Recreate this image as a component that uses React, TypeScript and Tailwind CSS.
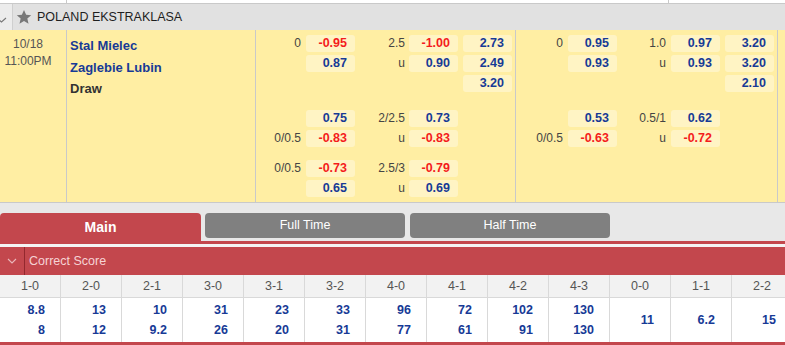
import React from "react";

type Row = { l1?: string; v1?: string; l2?: string; v2?: string; v3?: string };

const left: Row[][] = [
  [
    { l1: "0", v1: "-0.95", l2: "2.5", v2: "-1.00", v3: "2.73" },
    { v1: "0.87", l2: "u", v2: "0.90", v3: "2.49" },
    { v3: "3.20" },
  ],
  [
    { v1: "0.75", l2: "2/2.5", v2: "0.73" },
    { l1: "0/0.5", v1: "-0.83", l2: "u", v2: "-0.83" },
  ],
  [
    { l1: "0/0.5", v1: "-0.73", l2: "2.5/3", v2: "-0.79" },
    { v1: "0.65", l2: "u", v2: "0.69" },
  ],
];

const right: Row[][] = [
  [
    { l1: "0", v1: "0.95", l2: "1.0", v2: "0.97", v3: "3.20" },
    { v1: "0.93", l2: "u", v2: "0.93", v3: "3.20" },
    { v3: "2.10" },
  ],
  [
    { v1: "0.53", l2: "0.5/1", v2: "0.62" },
    { l1: "0/0.5", v1: "-0.63", l2: "u", v2: "-0.72" },
  ],
];

const scores: [string, string, string?][] = [
  ["1-0", "8.8", "8"],
  ["2-0", "13", "12"],
  ["2-1", "10", "9.2"],
  ["3-0", "31", "26"],
  ["3-1", "23", "20"],
  ["3-2", "33", "31"],
  ["4-0", "96", "77"],
  ["4-1", "72", "61"],
  ["4-2", "102", "91"],
  ["4-3", "130", "130"],
  ["0-0", "11"],
  ["1-1", "6.2"],
  ["2-2", "15"],
];

function Odd({ v }: { v?: string }) {
  if (!v) return <div className="w-[49px] shrink-0" />;
  const neg = v.startsWith("-");
  return (
    <div
      className={`w-[49px] h-[17px] shrink-0 rounded-[3px] bg-[#fff4c4] text-right pr-[8px] leading-[17px] font-bold text-[12.5px] ${
        neg ? "text-[#f41c1c]" : "text-[#173a96]"
      }`}
    >
      {v}
    </div>
  );
}

function Group({ blocks, wide }: { blocks: Row[][]; wide?: boolean }) {
  return (
    <div className={`${wide ? "w-[262px]" : "w-[260px]"} shrink-0 border-r border-[#c9c9c9] pt-[5px]`}>
      {blocks.map((rows, b) => (
        <div key={b} className={b === 0 ? "" : b === 1 ? "mt-[15px]" : "mt-[10px]"}>
          {rows.map((r, i) => (
            <div key={i} className="flex h-[20px] items-start">
              <div className={`${wide ? "w-[52px]" : "w-[50px]"} shrink-0 pr-[5px] text-right leading-[17px] text-[12px] text-[#444]`}>
                {r.l1}
              </div>
              <Odd v={r.v1} />
              <div className={`w-[54px] shrink-0 ${wide ? "pr-[5px]" : "pr-[4px]"} text-right leading-[17px] text-[12px] text-[#444]`}>
                {r.l2}
              </div>
              <Odd v={r.v2} />
              <div className="w-[5px] shrink-0" />
              <Odd v={r.v3} />
            </div>
          ))}
        </div>
      ))}
    </div>
  );
}

export default function App() {
  return (
    <div className="w-[785px] h-[345px] overflow-hidden bg-[#e8e8e8] font-['Liberation_Sans',Arial,sans-serif]">
      {/* previous row stub */}
      <div className="h-[4px] bg-white border-b border-[#c9c9c9] flex">
        <div className="w-[67px] border-r border-[#c9c9c9]" />
        <div className="w-[602px] border-r border-[#c9c9c9]" />
      </div>

      {/* league header */}
      <div className="h-[26px] bg-[#e1e1e1] flex items-center">
        <div className="w-[13px] h-full bg-[#ececec] border-r border-[#cfcfcf] shrink-0">
          <svg width="12" height="26" viewBox="0 0 12 26">
            <polyline points="-3,14 1.5,18 6,14" fill="none" stroke="#777" strokeWidth="1.1" />
          </svg>
        </div>
        <svg className="ml-[3px]" width="16" height="16" viewBox="0 0 24 24">
          <path
            d="M12 1.5l3.2 7.1 7.6.7-5.8 5.1 1.8 7.6L12 18l-6.8 4 1.8-7.6L1.2 9.3l7.6-.7z"
            fill="#787878"
          />
        </svg>
        <span className="ml-[5px] text-[12.5px] text-[#1e1e1e]">POLAND EKSTRAKLASA</span>
      </div>

      {/* match */}
      <div className="h-[173px] bg-[#ffeea3] border-b border-[#c9c9c9] flex">
        <div className="w-[67px] shrink-0 border-r border-[#c9c9c9] pt-[6px] pr-[10px] text-center text-[12px] leading-[17px] text-[#555]">
          <div>10/18</div>
          <div>11:00PM</div>
        </div>
        <div className="w-[189px] shrink-0 border-r border-[#c9c9c9] pl-[3px] pt-[5px] text-[13px] font-bold leading-[21.5px]">
          <div className="text-[#173a96]">Stal Mielec</div>
          <div className="text-[#173a96]">Zaglebie Lubin</div>
          <div className="text-[#333]">Draw</div>
        </div>
        <Group blocks={left} />
        <Group blocks={right} wide />
      </div>

      {/* tabs */}
      <div className="pt-[10px]">
        <div className="flex h-[28px] items-start">
          <div className="w-[201px] h-[28px] shrink-0 rounded-t-[4px] bg-[#c3474d] text-center leading-[28px] text-[14px] font-bold text-white">
            Main
          </div>
          <div className="ml-[4px] w-[200px] h-[25px] shrink-0 rounded-[4px] bg-[#808080] text-center leading-[25px] text-[12.5px] text-white">
            Full Time
          </div>
          <div className="ml-[5px] w-[200px] h-[25px] shrink-0 rounded-[4px] bg-[#808080] text-center leading-[25px] text-[12.5px] text-white">
            Half Time
          </div>
        </div>
        <div className="h-[3px] bg-[#c3474d]" />
        <div className="h-[3px] bg-[#f4f4f4]" />
      </div>

      {/* correct score bar */}
      <div className="h-[28px] bg-[#c3474d] flex items-center">
        <div className="w-[25px] h-full shrink-0 border-r border-[#93282e] flex items-center justify-center">
          <svg width="10" height="6" viewBox="0 0 10 6">
            <polyline points="1,1 5,5 9,1" fill="none" stroke="#eab8bb" strokeWidth="1.1" />
          </svg>
        </div>
        <span className="ml-[4px] text-[12.5px] text-[#f6d3d5]">Correct Score</span>
      </div>

      {/* score table */}
      <div className="grid grid-cols-[repeat(13,61px)] w-[793px]">
        {scores.map(([s]) => (
          <div
            key={s}
            className="h-[23px] bg-[#f2f2f2] border-r border-b border-[#d9d9d9] text-center leading-[22px] text-[12.5px] text-[#555]"
          >
            {s}
          </div>
        ))}
        {scores.map(([s, a, b]) => (
          <div
            key={s + "v"}
            className="h-[44px] bg-white border-r border-[#d9d9d9] flex flex-col justify-center text-right text-[12.5px] font-bold text-[#173a96] leading-[20px]"
          >
            {b ? (
              <>
                <div className="pr-[15px]">{a}</div>
                <div className="pr-[15px]">{b}</div>
              </>
            ) : (
              <div className="pr-[16px]">{a}</div>
            )}
          </div>
        ))}
      </div>
      <div className="h-[3px] bg-[#c3474d]" />
    </div>
  );
}
